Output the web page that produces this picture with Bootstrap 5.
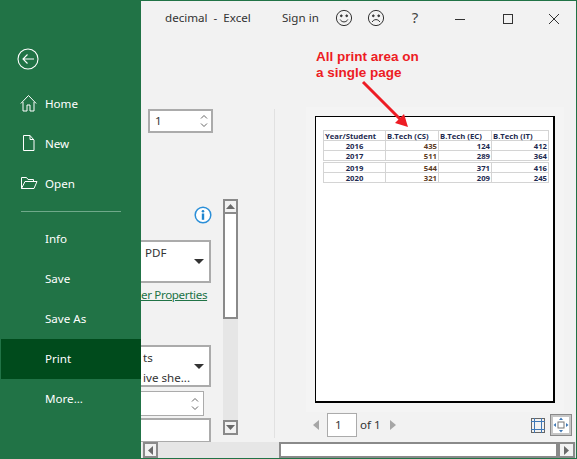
<!DOCTYPE html>
<html lang="en">
<head>
<meta charset="utf-8">
<title>decimal - Excel</title>
<link href="https://cdn.jsdelivr.net/npm/bootstrap@5.3.0/dist/css/bootstrap.min.css" rel="stylesheet">
<style>
html,body{margin:0;width:577px;height:459px;overflow:hidden;background:#f2f2f2}
body{font-family:"Noto Sans","Open Sans",sans-serif;font-size:11.6px;color:#333}
.xl-app{width:577px;height:459px;border:1px solid #217346;border-left:0;background:#f2f2f2;overflow:hidden}
.xl-side{width:141px;flex:none;background:#217346;color:#fff;z-index:2;position:relative}
.xl-back{height:40px;margin-top:38px;margin-bottom:5px;padding-left:17px}
.xl-item{height:40px;padding-left:45px;color:#fff;position:relative;text-decoration:none;font-size:11.6px}
.xl-item svg{position:absolute;left:20px;top:10px}
.xl-item.xl-on{background:#004b1c;margin-left:1px;padding-left:44px}
.xl-rule{height:1px;background:#6fa98a;margin:7px 20px 7px 21px}
.xl-main{flex:1;min-width:0}
.xl-title{height:33px;flex:none;color:#333}
.xl-t1{width:117px;margin-left:24px;white-space:pre}
.xl-t2{width:46px}
.xl-ic{width:32px;flex:none;text-align:center}
.xl-q{width:44px;flex:none;text-align:center;font-size:15px;color:#444;margin:0 7px 0 1px}
.xl-m1{margin-left:14px}
.xl-body{height:404px;flex:none}
.xl-opts{width:82px;flex:none;padding-top:75px;color:#333;position:relative}
.xl-spin{background:#fff;border:1px solid #ababab;box-shadow:inset 0 0 0 1px #ababab;height:24px;width:65px;margin-left:7px;padding-left:6px}
.xl-spin b{font-weight:400;color:#333}
.xl-spinar{margin-left:auto;margin-right:4px;gap:4px;line-height:0}
.xl-info{height:18px;margin-top:72px;text-align:right;padding-right:11px}
.xl-drop{width:72px;margin-left:-2px;background:#fff;border:1px solid #ababab;box-shadow:inset 0 0 0 1px #ababab;position:relative;white-space:nowrap}
.xl-d1{height:43px;margin-top:17px;padding:3px 0 0 5px}
.xl-d2{height:42px;margin-top:43px;padding:2px 0 0 3px;line-height:20px}
.xl-d3{height:24px;margin-top:2px;border-bottom:0;width:72px}
.xl-drop i{position:absolute;right:6px;top:18px;border:5px solid transparent;border-top:5px solid #333;border-bottom:0}
.xl-spin2{width:65px;height:25px;margin-left:-2px;margin-top:4px;background:#fff;border:1px solid #ababab;padding-right:4px}
.xl-arrows2{gap:4px;line-height:0}
.xl-link{display:block;margin-top:5px;padding-left:0;color:#217346;text-decoration:underline;white-space:nowrap;line-height:14px;letter-spacing:-.35px}
.xl-vs{width:15px;flex:none;margin-top:165px;height:236px;background:#e6e6e6}
.xl-sb{height:15px;flex:none;background:#f2f2f2;border:2px solid #8a8a8a}
.xl-thumb{height:105px;flex:none;background:#fff;border:2px solid #8a8a8a;border-top:0}
.xl-gap{flex:1}
.xl-div{width:1px;flex:none;height:329px;background:#e1e1e1;margin-top:75px;margin-left:36px}
.xl-prev{flex:1;position:relative;min-width:0}
.xl-note{margin:15px 0 0 41px;color:#ed1c24;font-family:"Liberation Sans",sans-serif;font-weight:700;font-size:13.5px;line-height:16px}
.xl-arrow{position:absolute;left:80px;top:45px}
.xl-page{width:240px;height:287px;margin:35px 0 0 40px;background:#fff;border:solid #000;border-width:1px 2px 2px 1px;padding:13px 6px 0 7px;box-shadow:0 0 0 9px #f4f4f4}
.xl-tbl{width:225px;table-layout:fixed;border-collapse:collapse;margin:0;font-family:"Open Sans",sans-serif;font-size:7.7px;font-weight:700;line-height:8px;color:#1d2a50}
.xl-tbl td{border:1px solid #d4d4d4;height:10px;padding:0 1px;white-space:nowrap}
.xl-tbl tr.xl-sp td{height:2px;border-left:0;border-right:0;padding:0;line-height:0;font-size:0}
.xl-c1{width:62px}
.xl-c2{width:53px}
.xl-c4{width:57px}
.xl-o{color:#5d3c24}
.xl-pager{height:24px;margin-top:10px;margin-left:38px}
.xl-pin{width:30px;height:24px;background:#fff;border:1px solid #ababab;margin:0 3px 0 8px;padding-left:7px;color:#333}
.xl-of{width:30px;color:#333}
.xl-zoom{width:22px;height:22px;background:#c6c6c6;border:1px solid #8a8a8a;margin-left:5px;margin-right:4px}
.xl-hs{height:16px;flex:none;background:#e6e6e6;margin-top:4px;margin-left:1px}
.xl-hb{width:15px;height:16px;flex:none;background:#f2f2f2;border:2px solid #8a8a8a;margin-left:1px}
.xl-hb2{width:17px;margin-left:0}
.xl-hthumb{width:279px;height:16px;background:#fff;border:2px solid #8a8a8a;border-right-width:2px;margin-left:121px;flex:none}
</style>
</head>
<body>
<div class="xl-app d-flex">
  <nav class="xl-side d-flex flex-column">
    <div class="xl-back d-flex align-items-center">
      <svg width="22" height="22" viewBox="0 0 22 22" fill="none" stroke="#fff" stroke-width="1.1"><circle cx="11" cy="11" r="10"/><path d="M17 11H6M10.500 6.500 6 11l4.500 4.500"/></svg>
    </div>
    <a class="xl-item d-flex align-items-center" href="#"><svg width="17" height="18" viewBox="0 0 17 18" fill="none" stroke="#fff"><path d="M.8 9.500 8.500 1.500l7.700 8M3 8v9h4v-6h3v6h4V8"/></svg>Home</a>
    <a class="xl-item d-flex align-items-center" href="#"><svg width="17" height="18" viewBox="0 0 17 18" fill="none" stroke="#fff"><path d="M3.500 1.500h6.500l4 4.500V16.500H3.500zM10 1.500V5.500h4"/></svg>New</a>
    <a class="xl-item d-flex align-items-center" href="#"><svg width="18" height="18" viewBox="0 0 18 18" fill="none" stroke="#fff"><path d="M1.500 14.500V3.500h5l1.500 2h5.500v2M1.500 14.500 5 7.500h12l-3 7z"/></svg>Open</a>
    <div class="xl-rule"></div>
    <a class="xl-item d-flex align-items-center" href="#">Info</a>
    <a class="xl-item d-flex align-items-center" href="#">Save</a>
    <a class="xl-item d-flex align-items-center" href="#">Save As</a>
    <a class="xl-item xl-on d-flex align-items-center" href="#">Print</a>
    <a class="xl-item d-flex align-items-center" href="#">More...</a>
  </nav>
  <main class="xl-main d-flex flex-column">
    <div class="xl-title d-flex align-items-center">
      <div class="xl-t1">decimal  -  Excel</div>
      <div class="xl-t2">Sign in</div>
      <div class="xl-ic"><svg width="18" height="18" viewBox="0 0 18 18" fill="none" stroke="#333"><circle cx="9" cy="9" r="7.600"/><path d="M5.200 10.500c1.500 3.200 6.100 3.200 7.600 0"/><circle cx="6.300" cy="6.800" r=".9" fill="#333"/><circle cx="11.700" cy="6.800" r=".9" fill="#333"/></svg></div>
      <div class="xl-ic"><svg width="18" height="18" viewBox="0 0 18 18" fill="none" stroke="#333"><circle cx="9" cy="9" r="7.600"/><path d="M5.200 13c1.500-3.200 6.100-3.200 7.600 0"/><circle cx="6.300" cy="6.800" r=".9" fill="#333"/><circle cx="11.700" cy="6.800" r=".9" fill="#333"/></svg></div>
      <div class="xl-q">?</div>
      <div class="xl-ic"><svg width="12" height="12" viewBox="0 0 12 12" stroke="#333" fill="none"><path d="M1 6.500h10"/></svg></div>
      <div class="xl-ic ms-3"><svg width="12" height="12" viewBox="0 0 12 12" stroke="#333" fill="none"><rect x="1.500" y="1.500" width="9" height="9"/></svg></div>
      <div class="xl-ic xl-m1"><svg width="12" height="12" viewBox="0 0 12 12" stroke="#333" fill="none"><path d="M1 1l10 10M11 1 1 11"/></svg></div>
    </div>
    <div class="xl-body d-flex">
      <div class="xl-opts">
        <div class="xl-spin d-flex align-items-center"><b>1</b>
          <span class="xl-spinar d-flex flex-column"><svg width="8" height="5" viewBox="0 0 8 5" fill="none" stroke="#666"><path d="M1 4.500 4 1.500l3 3"/></svg><svg width="8" height="5" viewBox="0 0 8 5" fill="none" stroke="#666"><path d="M1 .5l3 3 3-3"/></svg></span>
        </div>
        <div class="xl-info"><svg width="18" height="18" viewBox="0 0 18 18"><circle cx="9" cy="9" r="7.800" fill="#fff" stroke="#2b8fd8" stroke-width="1.500"/><circle cx="9" cy="5.300" r="1.300" fill="#1f86d0"/><rect x="7.800" y="7.500" width="2.400" height="6.300" fill="#1f86d0"/></svg></div>
        <div class="xl-drop xl-d1"><span>PDF</span><i></i></div>
        <a class="xl-link" href="#">er Properties</a>
        <div class="xl-drop xl-d2">ts<br>ive she...<i></i></div>
        <div class="xl-spin2 d-flex align-items-center justify-content-end"><span class="xl-arrows2 d-flex flex-column"><svg width="8" height="5" viewBox="0 0 8 5" fill="none" stroke="#666"><path d="M1 4.500 4 1.500l3 3"/></svg><svg width="8" height="5" viewBox="0 0 8 5" fill="none" stroke="#666"><path d="M1 .5l3 3 3-3"/></svg></span></div>
        <div class="xl-drop xl-d3"></div>
      </div>
      <div class="xl-vs d-flex flex-column">
        <div class="xl-sb d-flex align-items-center justify-content-center"><svg width="9" height="5" viewBox="0 0 9 5"><path d="M4.500 0 9 5H0z" fill="#6a6a6a"/></svg></div>
        <div class="xl-thumb"></div>
        <div class="xl-gap"></div>
        <div class="xl-sb d-flex align-items-center justify-content-center"><svg width="9" height="5" viewBox="0 0 9 5"><path d="M0 0h9L4.500 5z" fill="#6a6a6a"/></svg></div>
      </div>
      <div class="xl-div"></div>
      <div class="xl-prev">
        <div class="xl-note">All print area on<br>a single page</div>
        <svg class="xl-arrow" width="60" height="60" viewBox="0 0 60 60" fill="none"><path d="M8 3 46 41" stroke="#ed1c24" stroke-width="3"/><path d="M53 48 40 44 49 35z" fill="#ed1c24"/></svg>
        <div class="xl-page">
          <table class="xl-tbl">
            <colgroup><col class="xl-c1"><col class="xl-c2"><col class="xl-c2"><col class="xl-c4"></colgroup>
            <tr><td>Year/Student</td><td>B.Tech (CS)</td><td>B.Tech (EC)</td><td>B.Tech (IT)</td></tr>
            <tr><td class="text-center">2016</td><td class="text-end xl-o">435</td><td class="text-end">124</td><td class="text-end">412</td></tr>
            <tr><td class="text-center">2017</td><td class="text-end xl-o">511</td><td class="text-end">289</td><td class="text-end">364</td></tr>
            <tr class="xl-sp"><td colspan="4"></td></tr>
            <tr><td class="text-center">2019</td><td class="text-end xl-o">544</td><td class="text-end">371</td><td class="text-end">416</td></tr>
            <tr><td class="text-center">2020</td><td class="text-end xl-o">321</td><td class="text-end">209</td><td class="text-end">245</td></tr>
          </table>
        </div>
        <div class="xl-pager d-flex align-items-center">
          <svg width="6" height="10" viewBox="0 0 6 10"><path d="M6 0v10L0 5z" fill="#a6a6a6"/></svg>
          <div class="xl-pin d-flex align-items-center">1</div>
          <div class="xl-of">of 1</div>
          <svg width="6" height="10" viewBox="0 0 6 10"><path d="M0 0v10l6-5z" fill="#a6a6a6"/></svg>
          <svg class="ms-auto" width="14" height="15" viewBox="0 0 14 15" fill="none" stroke="#3f78b5"><rect x=".5" y=".5" width="13" height="14" stroke="#666"/><path d="M3.500 0v15M10.500 0v15M0 3.500h14M0 11.500h14"/></svg>
          <div class="xl-zoom d-flex align-items-center justify-content-center"><svg width="16" height="16" viewBox="0 0 16 16" fill="none"><rect width="16" height="16" fill="#fff"/><rect x="5" y="5" width="6" height="6" stroke="#777"/><path d="M8 .5 6 3h4zM8 15.500 6 13h4zM.5 8 3 6v4zM15.500 8 13 6v4z" fill="#3f78b5"/></svg></div>
        </div>
      </div>
    </div>
    <div class="xl-hs d-flex">
      <div class="xl-hb d-flex align-items-center justify-content-center"><svg width="5" height="9" viewBox="0 0 5 9"><path d="M5 0v9L0 4.500z" fill="#6a6a6a"/></svg></div>
      <div class="xl-hthumb"></div>
      <div class="xl-hb xl-hb2 d-flex align-items-center justify-content-center"><svg width="5" height="9" viewBox="0 0 5 9"><path d="M0 0v9l5-4.500z" fill="#6a6a6a"/></svg></div>
    </div>
  </main>
</div>
</body>
</html>
